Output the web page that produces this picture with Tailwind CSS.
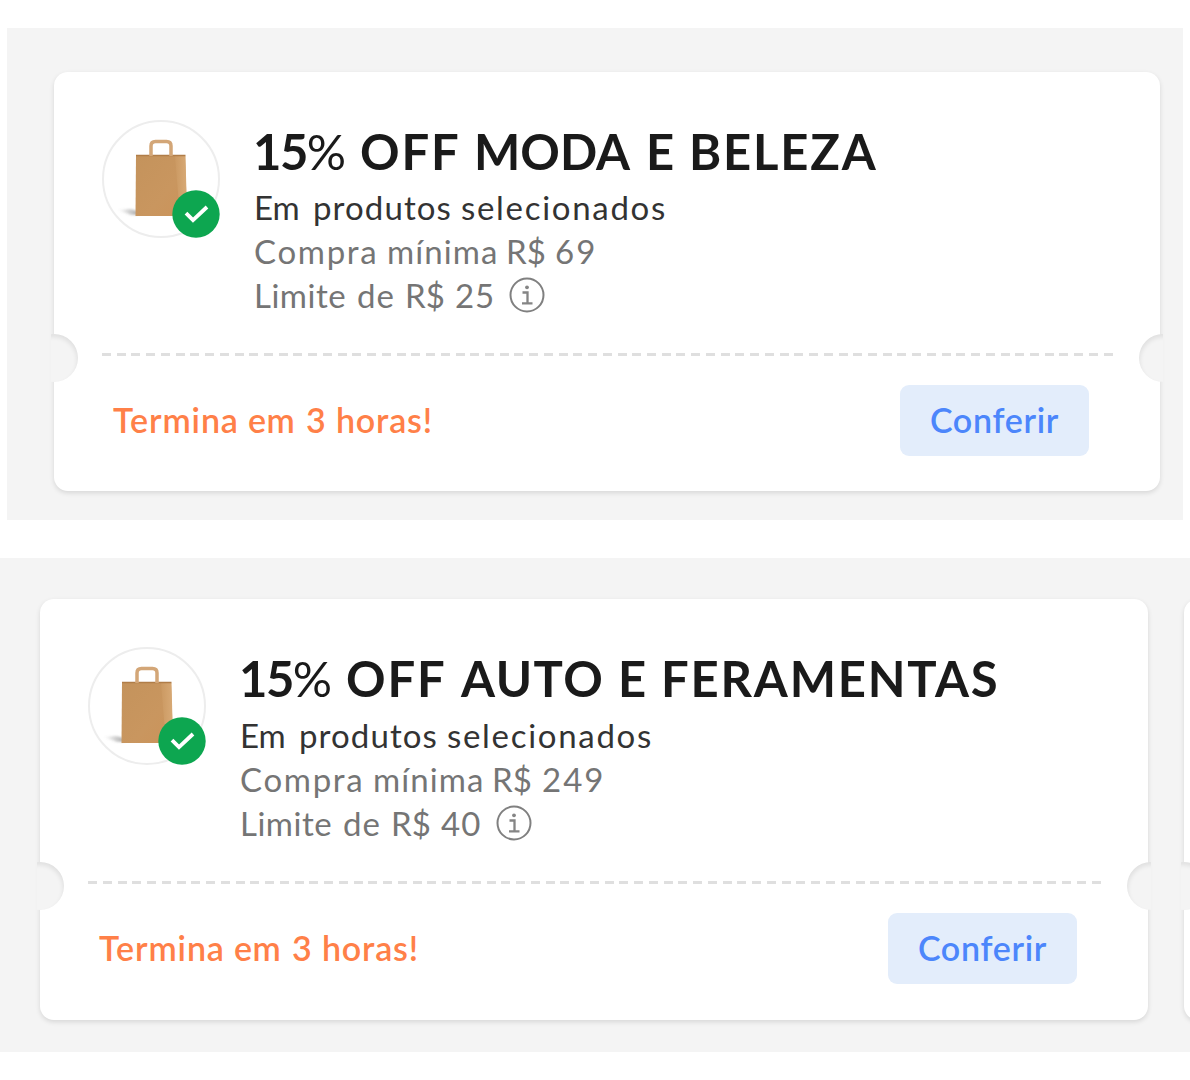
<!DOCTYPE html>
<html lang="pt-BR">
<head>
<meta charset="utf-8">
<title>Cupons</title>
<script src="https://cdn.jsdelivr.net/npm/@tailwindcss/browser@4"></script>
</head>
<body class="h-[1080px] w-[1190px] overflow-hidden bg-white pt-[28px] font-['Lato',sans-serif]">
<svg class="absolute h-0 w-0" aria-hidden="true">
  <defs>
    <linearGradient id="paper" x1="0" y1="0" x2="1" y2="1"><stop offset="0" stop-color="#c4935c"/><stop offset=".6" stop-color="#c9965f"/><stop offset="1" stop-color="#cb935a"/></linearGradient>
    <linearGradient id="side" x1="0" x2="1"><stop offset="0" stop-color="#cb9962"/><stop offset="1" stop-color="#d8aa76"/></linearGradient>
    <linearGradient id="shade" x1="0" x2="1"><stop offset="0" stop-color="#777" stop-opacity="0"/><stop offset="1" stop-color="#777" stop-opacity=".6"/></linearGradient>
    <filter id="soft" x="-50%" y="-100%" width="200%" height="300%"><feGaussianBlur stdDeviation="1.5 1"/></filter>
    <symbol id="bag" viewBox="0 0 118 118">
      <circle cx="59" cy="59" r="58" fill="#fff" stroke="#ededed" stroke-width="2"/>
      <path d="M16 90l12-1 8 2v4h-7z" fill="url(#shade)" filter="url(#soft)"/>
      <path d="M34 35.500H77L83 35.500 85 94 78 96H33.500z" fill="url(#paper)"/>
      <path d="M73 36h10.500l1.500 58-7 2z" fill="url(#side)"/>
      <path d="M34 35.500H83.500" stroke="#b07d48" stroke-width="1.500"/>
      <path d="M49 36V26q0-4.500 4.500-4.500H64.500q4.500 0 4.500 4.500V36" fill="none" stroke="#d3a677" stroke-width="3.500"/>
      <circle cx="94" cy="94" r="23.700" fill="#0da650"/>
      <path d="M84 93.200l7 7L105 87" fill="none" stroke="#fff" stroke-width="3.800"/>
    </symbol>
    <symbol id="info" viewBox="0 0 36 36">
      <circle cx="18" cy="18" r="16.500" fill="none" stroke="#808080" stroke-width="2"/>
      <path d="M13.500 15.500H18.500V26M13 26.300H23.500" fill="none" stroke="#858585" stroke-width="2.300"/>
      <circle cx="18" cy="10.300" r="1.900" fill="#858585"/>
    </symbol>
  </defs>
</svg>

<section class="ml-[7px] h-[492px] w-[1176px] bg-[#f4f4f4] pt-[44px] pl-[47px]">
  <article class="relative h-[419px] w-[1106px] rounded-[14px] bg-white pt-[48px] pl-[48px] shadow-[0_2px_5px_rgba(0,0,0,0.12)]">
    <div class="flex h-[233px]">
      <svg class="h-[118px] w-[118px] shrink-0"><use href="#bag"/></svg>
      <div class="ml-[34px] pt-[4px] text-[33px] leading-[44px] whitespace-nowrap text-[#757575]">
        <h2 class="flex h-[61px] text-[49px] leading-[54px] font-bold text-[#1a1a1a]"><span class="w-[106px] -indent-px tracking-[-1.5px]">15<span class="font-normal">%</span></span><span class="w-[114px] tracking-[1.8px]">OFF</span><span class="w-[172px] tracking-[0px]">MODA</span><span class="w-[43px]">E</span><span class="tracking-[1.8px]">BELEZA</span></h2>
        <p class="flex text-[#333]"><span class="w-[59px]">Em</span><span class="w-[148px] tracking-[1.1px]">produtos</span><span class="tracking-[1.700px]">selecionados</span></p>
        <p class="flex"><span class="w-[133px] tracking-[1.700px]">Compra</span><span class="w-[119px] tracking-[1.1px]">mínima</span><span class="w-[49px]">R$</span><span class="tracking-[2px]">69</span></p>
        <p class="flex"><span class="w-[103px] tracking-[0.5px]">Limite</span><span class="w-[48px] tracking-[1px]">de</span><span class="w-[50px]">R$</span><span class="w-[54px] tracking-[0.8px]">25</span><svg class="mt-[4px] h-[36px] w-[36px]"><use href="#info"/></svg></p>
      </div>
    </div>
    <div class="h-[3px] w-[1011px] bg-[repeating-linear-gradient(90deg,#dfdfdf_0_9px,transparent_9px_14.730px)]"></div>
    <div class="flex items-center justify-between pt-[29px] pr-[71px] pl-[11px] text-[34px]">
      <p class="-mt-[2px] flex font-semibold text-[#ff8048]"><span class="w-[135px] tracking-[0.9px]">Termina</span><span class="w-[58px] tracking-[0.5px]">em</span><span class="w-[30px]">3</span><span class="tracking-[0.8px]">horas!</span></p>
      <button class="flex h-[71px] w-[189px] items-center justify-center rounded-[9px] bg-[#e3edfb] pb-[2px] font-semibold tracking-[0.7px] text-[#4c86fb]">Conferir</button>
    </div>
    <div class="absolute top-[262px] -left-[3px] h-[48px] w-[27px] overflow-hidden"><div class="-ml-[21px] h-[48px] w-[48px] rounded-full bg-[#f4f4f4] shadow-[inset_-1px_3px_4px_rgba(0,0,0,0.08)]"></div></div>
    <div class="absolute top-[262px] -right-[3px] h-[48px] w-[24px] overflow-hidden"><div class="h-[48px] w-[48px] rounded-full bg-[#f4f4f4] shadow-[inset_1px_3px_4px_rgba(0,0,0,0.08)]"></div></div>
  </article>
</section>

<section class="mt-[38px] flex h-[494px] w-[1190px] gap-[36px] overflow-hidden bg-[#f4f4f4] pt-[41px] pl-[40px]">
  <article class="relative h-[421px] w-[1108px] shrink-0 rounded-[14px] bg-white pt-[48px] pl-[48px] shadow-[0_2px_5px_rgba(0,0,0,0.12)]">
    <div class="flex h-[234px]">
      <svg class="h-[118px] w-[118px] shrink-0"><use href="#bag"/></svg>
      <div class="ml-[34px] pt-[4px] text-[33px] leading-[44px] whitespace-nowrap text-[#757575]">
        <h2 class="flex h-[62px] text-[49px] leading-[54px] font-bold text-[#1a1a1a]"><span class="w-[106px] -indent-px tracking-[-1.5px]">15<span class="font-normal">%</span></span><span class="w-[115px] tracking-[1.8px]">OFF</span><span class="w-[157px] tracking-[1.5px]">AUTO</span><span class="w-[43px]">E</span><span class="tracking-[1.800px]">FERAMENTAS</span></h2>
        <p class="flex text-[#333]"><span class="w-[59px]">Em</span><span class="w-[148px] tracking-[1.1px]">produtos</span><span class="tracking-[1.700px]">selecionados</span></p>
        <p class="flex"><span class="w-[133px] tracking-[1.700px]">Compra</span><span class="w-[119px] tracking-[1.1px]">mínima</span><span class="w-[50px]">R$</span><span class="tracking-[2px]">249</span></p>
        <p class="flex"><span class="w-[103px] tracking-[0.5px]">Limite</span><span class="w-[48px] tracking-[1px]">de</span><span class="w-[50px]">R$</span><span class="w-[55px] tracking-[1px]">40</span><svg class="mt-[4px] h-[36px] w-[36px]"><use href="#info"/></svg></p>
      </div>
    </div>
    <div class="h-[3px] w-[1013px] bg-[repeating-linear-gradient(90deg,#dfdfdf_0_9px,transparent_9px_14.760px)]"></div>
    <div class="flex items-center justify-between pt-[29px] pr-[71px] pl-[11px] text-[34px]">
      <p class="-mt-[2px] flex font-semibold text-[#ff8048]"><span class="w-[135px] tracking-[0.9px]">Termina</span><span class="w-[58px] tracking-[0.5px]">em</span><span class="w-[30px]">3</span><span class="tracking-[0.8px]">horas!</span></p>
      <button class="flex h-[71px] w-[189px] items-center justify-center rounded-[9px] bg-[#e3edfb] pb-[2px] font-semibold tracking-[0.7px] text-[#4c86fb]">Conferir</button>
    </div>
    <div class="absolute top-[263px] -left-[3px] h-[48px] w-[27px] overflow-hidden"><div class="-ml-[21px] h-[48px] w-[48px] rounded-full bg-[#f4f4f4] shadow-[inset_-1px_3px_4px_rgba(0,0,0,0.08)]"></div></div>
    <div class="absolute top-[263px] -right-[3px] h-[48px] w-[24px] overflow-hidden"><div class="h-[48px] w-[48px] rounded-full bg-[#f4f4f4] shadow-[inset_1px_3px_4px_rgba(0,0,0,0.08)]"></div></div>
  </article>
  <article class="relative h-[421px] w-[1108px] shrink-0 rounded-[14px] bg-white shadow-[0_2px_5px_rgba(0,0,0,0.12)]">
    <div class="absolute top-[263px] -left-[3px] h-[48px] w-[27px] overflow-hidden"><div class="-ml-[21px] h-[48px] w-[48px] rounded-full bg-[#f4f4f4] shadow-[inset_-1px_3px_4px_rgba(0,0,0,0.08)]"></div></div>
  </article>
</section>
</body>
</html>
